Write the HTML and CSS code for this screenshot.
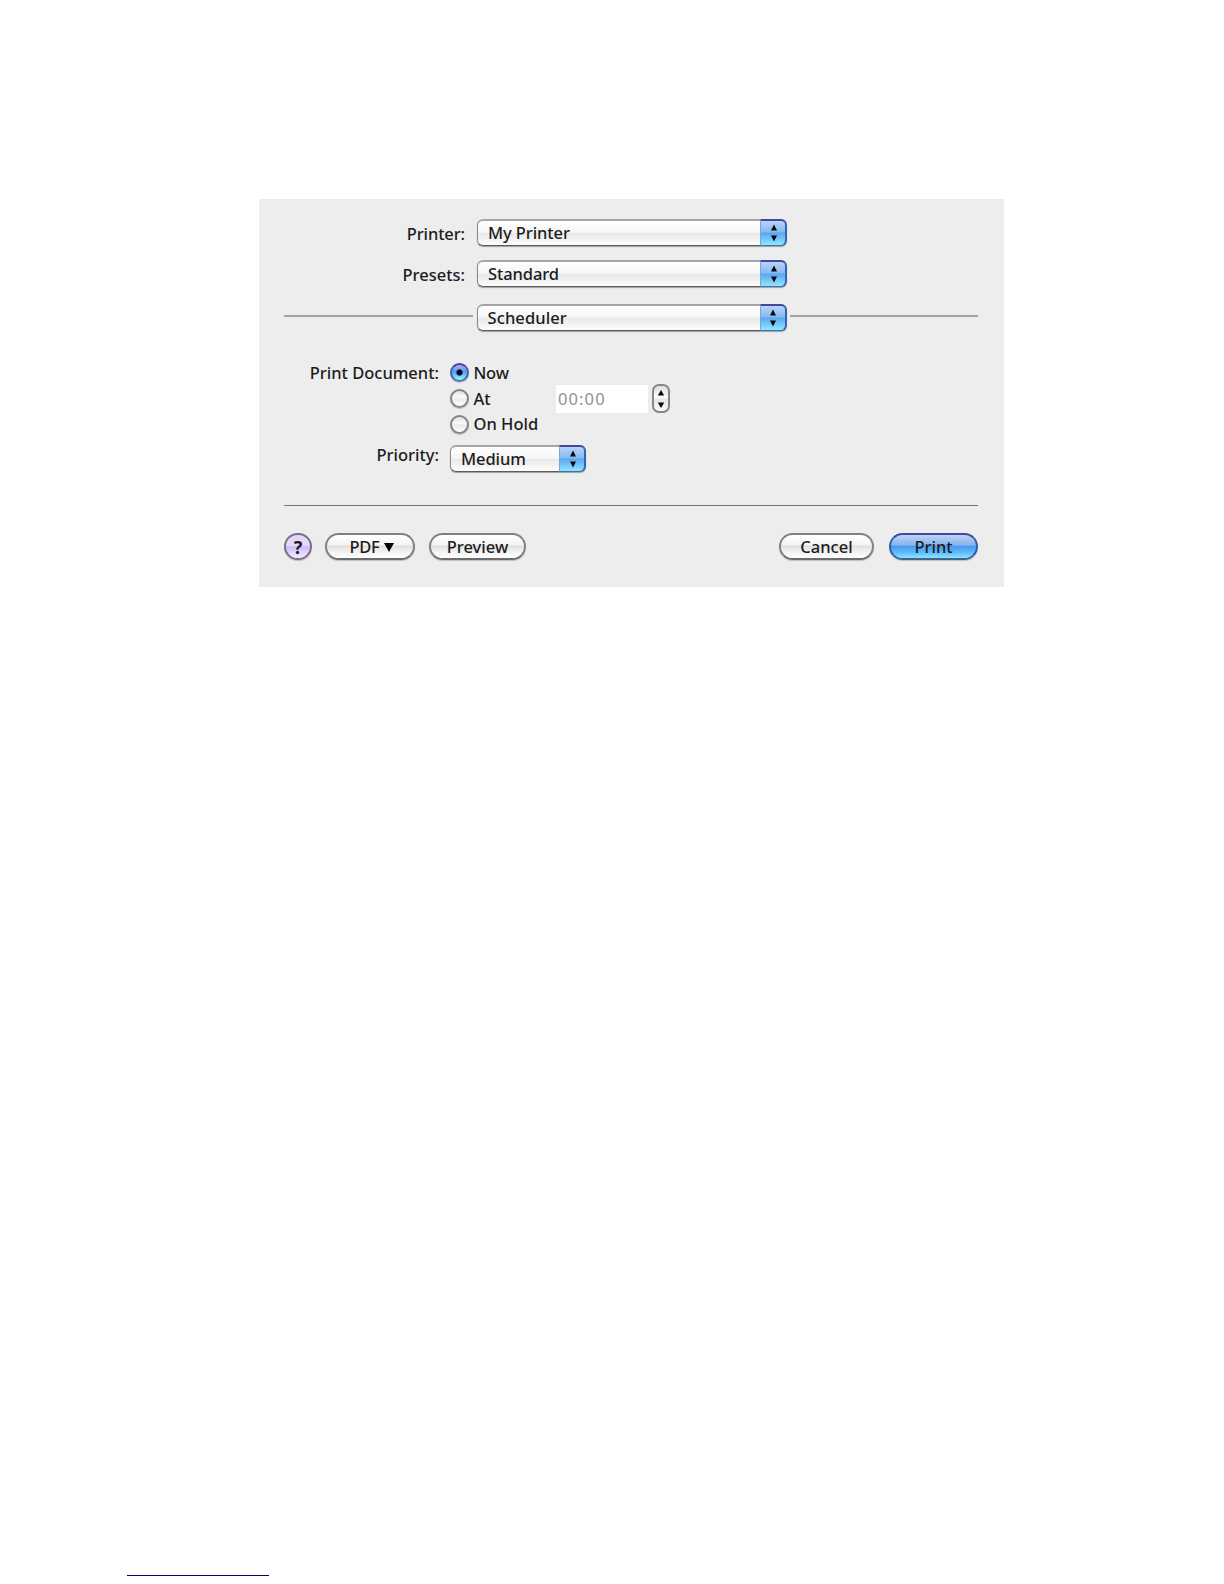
FILE: index.html
```
<!DOCTYPE html>
<html lang="en">
<head>
<meta charset="utf-8">
<title>Print</title>
<link rel="stylesheet" href="styles.css">
</head>
<body>
<svg class="defs" width="0" height="0" aria-hidden="true">
  <symbol id="arrows" viewBox="0 0 8 18"><path d="M4 .5 7 6.5H1ZM4 17.5 7 11.5H1Z"/></symbol>
</svg>
<main class="dialog">
  <div class="row printer">
    <span class="label">Printer:</span>
    <div class="popup"><span class="value">My Printer</span><span class="cap"><svg class="arrows"><use href="#arrows"/></svg></span></div>
  </div>
  <div class="row presets">
    <span class="label">Presets:</span>
    <div class="popup"><span class="value">Standard</span><span class="cap"><svg class="arrows"><use href="#arrows"/></svg></span></div>
  </div>
  <div class="section">
    <span class="rule"></span>
    <div class="popup"><span class="value">Scheduler</span><span class="cap"><svg class="arrows"><use href="#arrows"/></svg></span></div>
    <span class="rule"></span>
  </div>
  <div class="options">
    <span class="label document">Print Document:</span>
    <div class="choices">
      <div class="choice"><span class="radio on"></span><span class="now">Now</span></div>
      <div class="choice">
        <span class="radio"></span><span class="at">At</span>
        <span class="time">00:00</span>
        <span class="stepper"><svg class="steps" viewBox="0 0 8 20"><path d="M4 1 7.2 6.5H.8ZM4 19 7.2 13.5H.8Z"/></svg></span>
      </div>
      <div class="choice"><span class="radio"></span><span class="hold">On Hold</span></div>
    </div>
    <span class="label priority">Priority:</span>
    <div class="popup small"><span class="value">Medium</span><span class="cap"><svg class="arrows"><use href="#arrows"/></svg></span></div>
  </div>
  <div class="rule full"></div>
  <div class="actions">
    <span class="help">?</span>
    <span class="button pdf">PDF<svg class="down" viewBox="0 0 10 10"><path d="M0 1H10L5 10Z"/></svg></span>
    <span class="button preview">Preview</span>
    <span class="button cancel">Cancel</span>
    <span class="button print">Print</span>
  </div>
</main>
<footer class="footer"><span class="link-line"></span></footer>
</body>
</html>
```
FILE: styles.css
```
* { box-sizing: border-box; }
body {
  margin: 0;
  height: 1584px;
  padding: 199px 0 8px;
  display: flex;
  flex-direction: column;
  background: #fff;
  color: #1c1c1c;
  font: 500 16.5px/26px "Noto Sans", "Open Sans", sans-serif;
  white-space: nowrap;
}
.defs { display: block; flex: none; }
.dialog {
  width: 745px;
  height: 388px;
  margin-left: 259px;
  padding: 20px 26px 0 25px;
  background: #ededed;
  border-radius: 2px 0 0 0;
}
.row { display: flex; height: 27px; }
.row .label {
  width: 181px;
  margin-right: 12px;
  padding-top: 2px;
  text-align: right;
}
.printer .label { letter-spacing: -.1px; }
.row .popup { flex: none; }
.presets { margin-top: 14px; }
.popup {
  width: 310px;
  height: 27px;
  display: flex;
  justify-content: space-between;
  border: 1px solid #8b8b8b;
  border-top: 2px solid #a6a6a6;
  border-bottom-color: #5c5c5c;
  border-right: 0;
  border-radius: 6px;
  background: linear-gradient(#fff 0, #f6f6f6 47%, #e8e8e8 52%, #fdfdfd 100%);
  box-shadow: 0 1px 1px #0005;
}
.value { padding-left: 10px; line-height: 24px; letter-spacing: -.1px; }
.section .value { letter-spacing: .1px; }
.cap {
  width: 27px;
  margin: -2px 0 -1px;
  display: flex;
  align-items: center;
  justify-content: center;
  border: 1px solid #3c73b4;
  border-top: 2px solid #4247a0;
  border-right: 2px solid #3165b4;
  border-left-color: #76a7da;
  border-radius: 0 6px 6px 0;
  background: linear-gradient(#b7d4f7 0, #86b9f3 46%, #5ba5f1 50%, #8ee8ff 100%);
}
.arrows { width: 8px; height: 18px; margin-left: 1px; fill: #080808; }
.section { display: flex; align-items: center; margin-top: 17px; }
.rule { flex: 1; height: 2px; background: #a2a2a2; margin-top: -4px; }
.section .popup { margin: 0 3px 0 4px; }
.options {
  display: grid;
  grid-template-columns: 155px auto;
  column-gap: 11px;
  margin-top: 29px;
}
.options .label { text-align: right; }
.choice { height: 25.7px; display: flex; align-items: center; }
.radio {
  width: 19px;
  height: 19px;
  margin-right: 4.5px;
  border: 2px solid #858585;
  border-radius: 50%;
  background: linear-gradient(#e2e2e2, #fafafa 42%, #eaeaea 52%, #fff);
  box-shadow: 0 1px 1px #0003;
}
.radio.on {
  border-color: #3f4699 #3d67ab #477da5;
  background: radial-gradient(circle at center, #060d24 0 2.5px, transparent 3.7px), linear-gradient(#aaa9ee, #5b9cec 48%, #62b6fa 60%, #a2f5ff);
}
.now { letter-spacing: -.2px; }
.at { width: 82.5px; }
.time {
  width: 92px;
  height: 28px;
  padding-left: 2px;
  line-height: 28px;
  letter-spacing: 1.1px;
  background: #fff;
  color: #919191;
  font-weight: 400;
}
.stepper {
  width: 18px;
  height: 29px;
  margin-left: 4px;
  display: flex;
  align-items: center;
  justify-content: center;
  border: 2px solid #878787;
  border-radius: 7px;
  background: linear-gradient(#ddd, #fff 48%, #e6e6e6 52%, #fafafa);
}
.steps { width: 8px; height: 20px; fill: #080808; }
.priority { padding-top: 5px; }
.small { width: 136px; margin-top: 8px; }
.full { height: 1px; margin-top: 33px; background: #777; }
.actions { display: flex; margin-top: 27px; }
.button, .help {
  height: 27px;
  display: flex;
  align-items: center;
  justify-content: center;
  border: 2px solid #808080;
  border-bottom-color: #6c6c6c;
  border-radius: 14px;
  background: linear-gradient(#fff 0, #f4f4f4 43%, #dfdfdf 48%, #eee 65%, #fff 100%);
  box-shadow: 0 1px 1px #0003;
}
.help {
  width: 28px;
  border-color: #777181;
  background: linear-gradient(#e1d3fa, #e5d8ff 45%, #cfb9fa 52%, #f5edff);
  font-weight: 700;
  font-size: 18px;
}
.pdf { width: 90px; margin-left: 13px; padding-left: 4px; letter-spacing: -.3px; }
.down { width: 10px; height: 10px; margin-left: 5px; }
.preview { width: 97px; margin-left: 14px; }
.cancel { width: 95px; margin-left: auto; }
.print {
  width: 89px;
  margin-left: 15px;
  border-color: #4247a0 #305eac #3f668e;
  background: linear-gradient(#bed3f6 0, #85b4ee 44%, #4999ed 49%, #5dbafb 75%, #8ce4ff 100%);
}
.footer { margin-top: auto; padding-left: 127px; display: flex; }
.link-line { width: 142px; height: 1px; background: #000080; }
```
